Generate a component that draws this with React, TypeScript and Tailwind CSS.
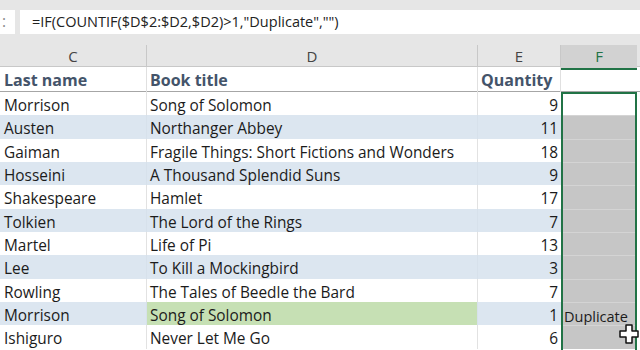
import React from "react";

type Row = { last: string; title: string; qty: number; dup?: boolean };

const rows: Row[] = [
  { last: "Morrison", title: "Song of Solomon", qty: 9 },
  { last: "Austen", title: "Northanger Abbey", qty: 11 },
  { last: "Gaiman", title: "Fragile Things: Short Fictions and Wonders", qty: 18 },
  { last: "Hosseini", title: "A Thousand Splendid Suns", qty: 9 },
  { last: "Shakespeare", title: "Hamlet", qty: 17 },
  { last: "Tolkien", title: "The Lord of the Rings", qty: 7 },
  { last: "Martel", title: "Life of Pi", qty: 13 },
  { last: "Lee", title: "To Kill a Mockingbird", qty: 3 },
  { last: "Rowling", title: "The Tales of Beedle the Bard", qty: 7 },
  { last: "Morrison", title: "Song of Solomon", qty: 1, dup: true },
  { last: "Ishiguro", title: "Never Let Me Go", qty: 6 },
];

const cols = "grid grid-cols-[147px_331px_83px_76px_3px]";

function PlusCursor() {
  return (
    <svg
      className="absolute left-[619px] top-[324px]"
      width="20"
      height="20"
      viewBox="0 0 20 20"
    >
      <path
        d="M7 1h6v6h6v6h-6v6H7v-6H1V7h6z"
        fill="#fff"
        stroke="#111"
        strokeWidth="1.5"
        strokeLinejoin="round"
      />
    </svg>
  );
}

export default function App() {
  return (
    <div className="relative w-[640px] h-[350px] overflow-hidden bg-white font-['Open_Sans',sans-serif] text-[15.4px] text-[#1b1b1b]">
      {/* formula bar */}
      <div className="flex h-[45px] bg-[#e6e6e6] pt-[10px] pb-[11px] gap-[5px]">
        <div className="w-[15px] bg-white text-[#888] leading-[24px] pl-[2px]">:</div>
        <div className="flex-1 bg-white pl-[12px] leading-[24px] text-[14.5px] text-[#222]">
          =IF(COUNTIF($D$2:$D2,$D2)&gt;1,"Duplicate","")
        </div>
      </div>

      {/* column letters */}
      <div className={`${cols} h-[22px] bg-[#e6e6e6] border-b border-[#c8c8c8] text-[#444] text-[15px] leading-[23px]`}>
        <div className="text-center border-r border-[#c8c8c8]">C</div>
        <div className="text-center border-r border-[#c8c8c8]">D</div>
        <div className="text-center border-r border-[#c8c8c8]">E</div>
        <div className="text-center bg-[#d2d2d2] text-[#217346] border-b-2 border-[#217346]">F</div>
        <div />
      </div>

      {/* header row */}
      <div className={`${cols} h-[25px] border-b border-[#a6a6a6] font-bold text-[16px] text-[#44546a] leading-[27px]`}>
        <div className="pl-[4px] border-r border-[#e0e0e0]">Last name</div>
        <div className="pl-[3px] border-r border-[#e0e0e0]">Book title</div>
        <div className="pl-[3px] border-r border-[#e0e0e0]">Quantity</div>
        <div />
        <div />
      </div>

      {/* data rows */}
      <div className="relative">
        {rows.map((r, i) => {
          const band = i % 2 === 1 ? "bg-[#dce6f0]" : "bg-white";
          const line = i % 2 === 1 ? "border-[#d7e1eb]" : "border-[#e2e2e2]";
          return (
            <div key={i} className={`${cols} h-[23.35px] leading-[27px] overflow-hidden`}>
              <div className={`${band} pl-[4px] border-r ${line}`}>{r.last}</div>
              <div className={`${r.dup ? "bg-[#c6e0b4]" : band} pl-[3px] border-r ${line}`}>
                {r.title}
              </div>
              <div className={`${band} pr-[3px] text-right`}>{r.qty}</div>
              <div
                className={`${i === 0 ? "bg-white" : "bg-[#c6c6c6] border-t border-[#d4d4d4]"} pl-[3px] whitespace-nowrap text-[14.5px]`}
              >
                {r.dup ? "Duplicate" : ""}
              </div>
              <div className="bg-white" />
            </div>
          );
        })}
        <div className="absolute left-[561px] top-0 w-[76px] h-[280px] border-2 border-[#217346] pointer-events-none" />
      </div>

      <PlusCursor />
    </div>
  );
}
